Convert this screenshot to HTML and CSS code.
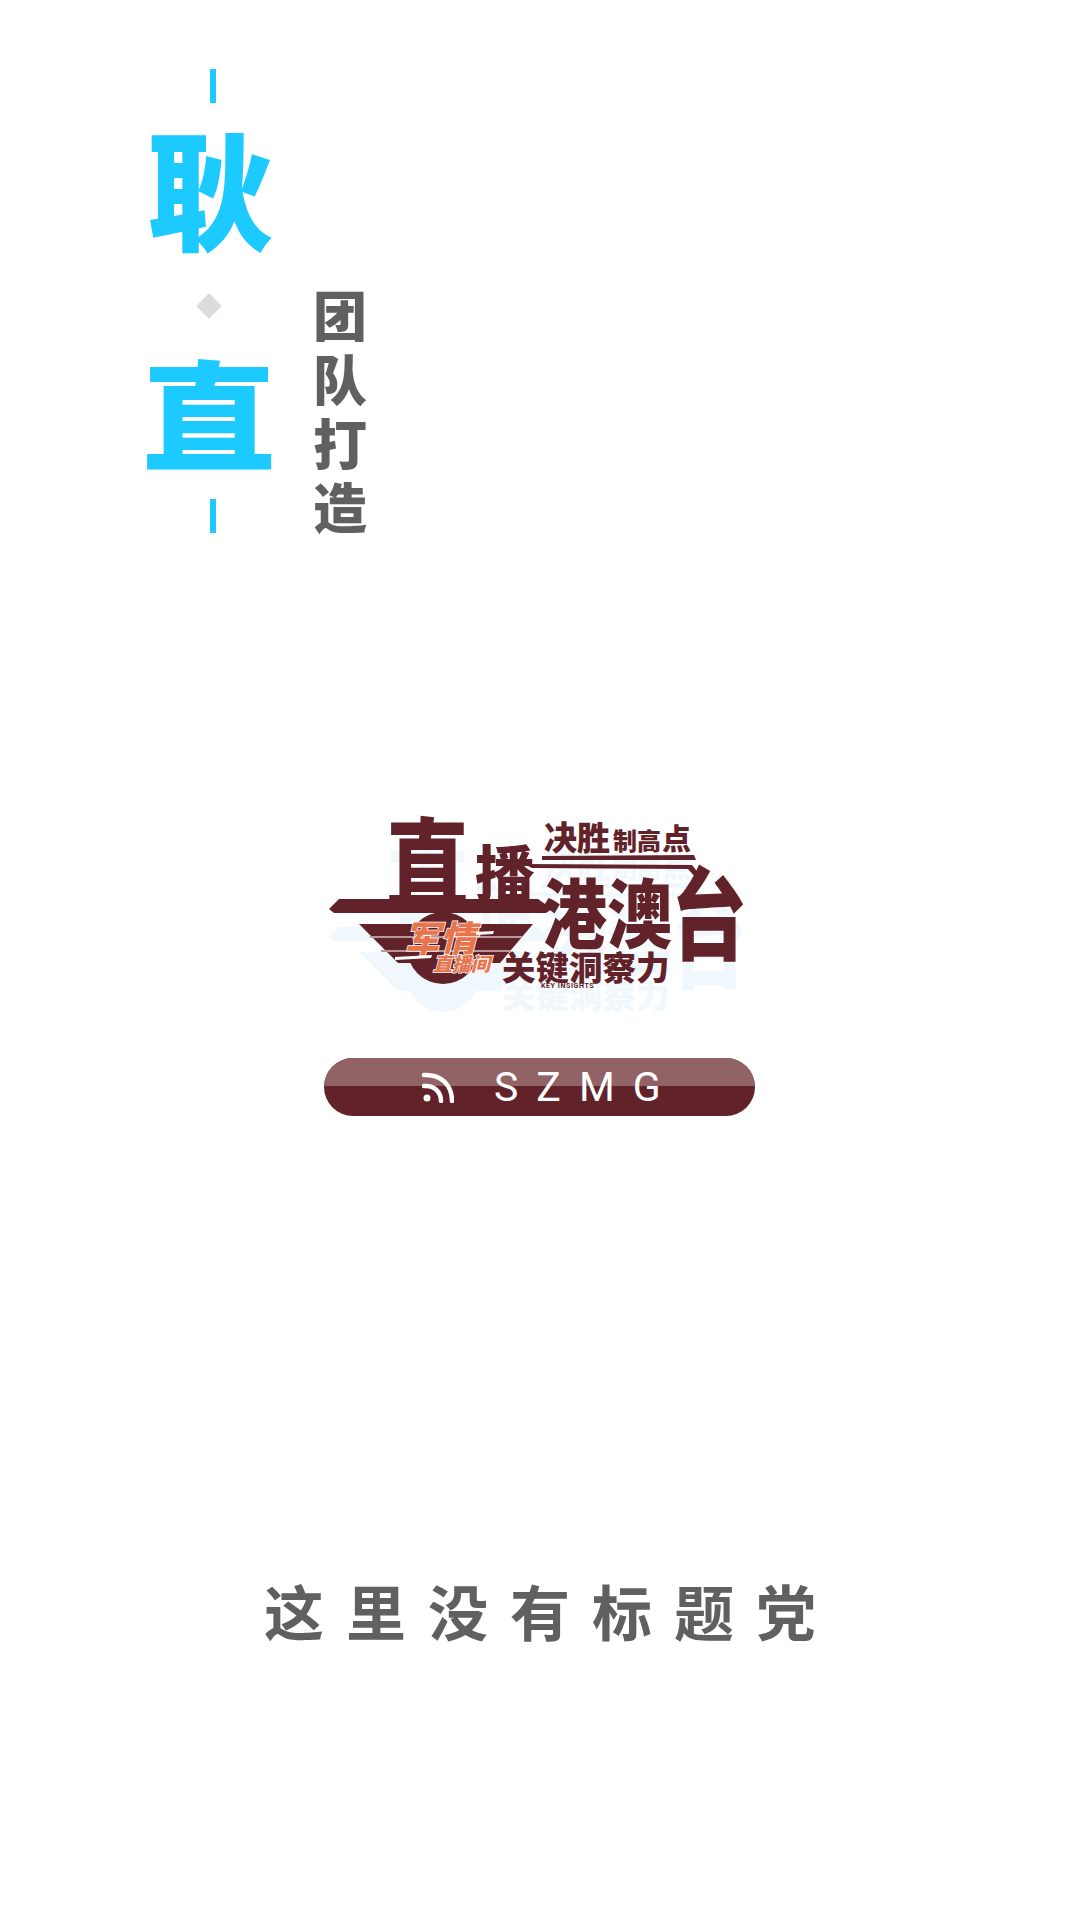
FILE: index.html
```html
<!DOCTYPE html>
<html lang="zh">
<head>
<meta charset="utf-8">
<title>耿直</title>
<link rel="stylesheet" href="styles.css">
</head>
<body>
<main class="page">
  <section class="hero">
    <div class="brand">
      <span class="dash"></span>
      <span class="brand-char brand-char-top">耿</span>
      <span class="diamond"></span>
      <span class="brand-char brand-char-bottom">直</span>
      <span class="dash dash-end"></span>
    </div>
    <div class="credit">
      <span>团</span><span>队</span><span>打</span><span>造</span>
    </div>
  </section>

  <section class="show">
    <svg class="logo" viewBox="0 0 460 240" width="460" height="240" role="img" aria-label="直播港澳台 决胜制高点 军情直播间 关键洞察力">
      <defs>
        <g id="logo-art">
          <text transform="translate(76 101) scale(0.94 1.12)" font-size="88">直</text>
          <text x="165" y="96" font-size="60">播</text>
          <text x="234" y="50" font-size="33">决胜</text>
          <text x="303" y="50" font-size="24">制高</text>
          <text x="352" y="50" font-size="29">点</text>
          <text transform="translate(232 142) scale(1 1.15)" font-size="65">港澳</text>
          <text transform="translate(361 152) scale(1 1.3)" font-size="76">台</text>
          <text x="192" y="180" font-size="33.5">关键洞察力</text>
          <polygon points="19,109 29,99 228,99 242,109 236,113 24,113"/>
          <polygon points="232,56 384,55 386,60 232,60"/>
          <polygon points="214,64 382,65 390,75 386,78 378,69 222,68"/>
          <circle cx="133" cy="148" r="36"/>
          <polygon points="49,124 223,124 190,163 88,163"/>
        </g>
      </defs>
      <use class="ghost" href="#logo-art" y="28"/>
      <use class="solid" href="#logo-art"/>
      <rect class="stripe" x="60" y="136" width="152" height="2"/>
      <rect class="stripe" x="71" y="150" width="130" height="2"/>
      <text class="junqing" x="94" y="152" font-size="36">军情</text>
      <text class="jilu" x="123" y="171" font-size="19">直播间</text>
      <polygon class="orange" points="85,157 122,155 121,158 85,160"/>
      <polygon class="orange" points="166,132 184,131 183,134 166,135"/>
      <text class="key" x="231" y="188" font-size="7">KEY INSIGHTS</text>
    </svg>

    <div class="tag">
      <span class="tag-shine"></span>
      <svg class="rss" viewBox="0 0 32 32" width="32" height="32" aria-hidden="true">
        <circle cx="5" cy="27" r="3.5"/>
        <path d="M2 15 C12 14 19 21 19 30" />
        <path d="M2 4 C19 3 30 14 30 30" />
      </svg>
      <span class="tag-label">SZMG</span>
    </div>
  </section>

  <h1 class="slogan">这里没有标题党</h1>
</main>
</body>
</html>
```
FILE: styles.css
```css
* { box-sizing: border-box; }
html, body { margin: 0; padding: 0; background: #fff; }
.page {
  width: 1080px;
  height: 1920px;
  overflow: hidden;
  font-family: "Noto Sans CJK SC", "Noto Sans", sans-serif;
}

.hero {
  display: flex;
  align-items: flex-start;
  padding: 69px 0 0 145px;
  gap: 41px;
}
.brand {
  width: 127px;
  display: flex;
  flex-direction: column;
  align-items: center;
}
.dash {
  width: 6px;
  height: 34px;
  background: #1dcaff;
  margin-left: 8px;
}
.dash-end { margin-top: 36px; }
.brand-char {
  color: #1dcaff;
  font-weight: 900;
  font-size: 128px;
  line-height: 128px;
  height: 128px;
  width: 127px;
  text-align: center;
}
.brand-char-top { margin-top: 19px; margin-left: 3px; }
.brand-char-bottom { margin-top: 32px; height: 116px; transform: scale(1.05, 0.92); }
.diamond {
  width: 18px;
  height: 18px;
  background: #dddbdd;
  transform: rotate(45deg);
  margin-top: 47px;
}
.credit {
  display: flex;
  flex-direction: column;
  margin-top: 213px;
  color: #606060;
  font-weight: 900;
  font-size: 54px;
  line-height: 64px;
}

.show {
  display: flex;
  flex-direction: column;
  align-items: center;
  margin-top: 262px;
}
.logo { display: block; }
.logo text { font-family: "Noto Sans CJK SC", sans-serif; font-weight: 900; }
.ghost { fill: #f1f8fd; }
.solid { fill: #622229; }
.stripe { fill: #b9989b; }
.logo .junqing, .logo .jilu {
  fill: #e8744c;
  stroke: #fff;
  stroke-width: 1.5px;
  paint-order: stroke;
  font-style: italic;
}
.orange { fill: #fff; }
.logo .key { fill: #622229; font-family: "Roboto", sans-serif; font-weight: 700; letter-spacing: 0.6px; }

.tag {
  position: relative;
  width: 431px;
  height: 58px;
  margin: 18px 1px 0 0;
  border-radius: 29px;
  background: #622229;
  overflow: hidden;
  display: flex;
  align-items: center;
  color: #fff;
  padding-left: 98px;
}
.tag-shine {
  position: absolute;
  left: 0;
  right: 0;
  top: 0;
  height: 28px;
  background: #926366;
}
.rss {
  position: relative;
  fill: #fff;
  stroke: none;
}
.rss path { fill: none; stroke: #fff; stroke-width: 4.5; stroke-linecap: round; }
.tag-label {
  position: relative;
  margin-left: 40px;
  font-family: "Roboto", sans-serif;
  font-size: 41px;
  line-height: 58px;
  letter-spacing: 18px;
}

.slogan {
  margin: 464px 0 0;
  padding-left: 22px;
  text-align: center;
  color: #606060;
  font-weight: 700;
  font-size: 60px;
  line-height: 60px;
  letter-spacing: 22px;
}
```
